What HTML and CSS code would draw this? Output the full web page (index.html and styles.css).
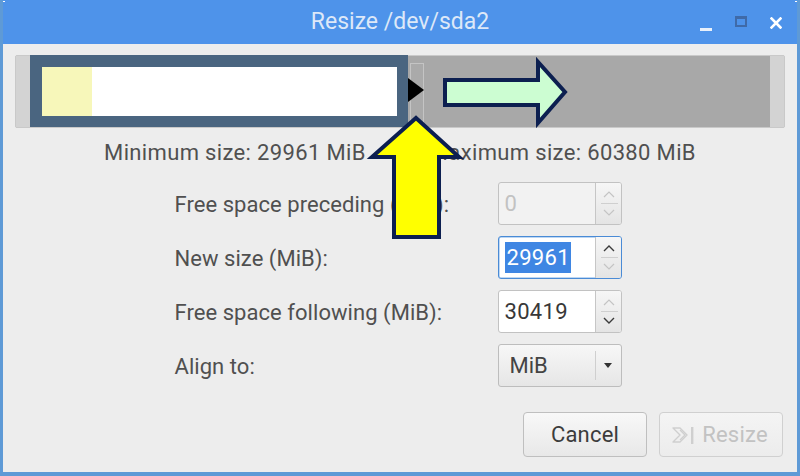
FILE: index.html
```html
<!DOCTYPE html>
<html>
<head>
<meta charset="utf-8">
<link rel="stylesheet" href="styles.css">
</head>
<body>
<div class="window">
  <div class="titlebar">
    <span class="grip grip-l"></span>
    <span class="grip grip-r"></span>
    <div class="tb-spacer"></div>
    <div class="title">Resize /dev/sda2</div>
    <div class="controls">
      <span class="ctl ctl-min"></span>
      <span class="ctl ctl-max"></span>
      <svg class="ctl ctl-close" viewBox="0 0 12 12" width="12" height="12"><path d="M1.5 1.5 L10.5 10.5 M10.5 1.5 L1.5 10.5" stroke="#ffffff" stroke-width="2.6" stroke-linecap="square"/></svg>
    </div>
  </div>

  <div class="content">
    <div class="partbar">
      <div class="cap"></div>
      <div class="part">
        <div class="used"></div>
        <div class="free"></div>
      </div>
      <div class="handle">
        <svg class="pointer" viewBox="0 0 16 24" width="16" height="24"><polygon points="0,0 16,12 0,24" fill="#000000"/></svg>
      </div>
      <div class="unalloc"></div>
      <div class="cap"></div>
    </div>

    <div class="sizes">
      <span>Minimum size: 29961 MiB</span>
      <span>Maximum size: 60380 MiB</span>
    </div>

    <div class="form">
      <label class="lbl">Free space preceding (MiB):</label>
      <div class="spin disabled">
        <div class="entry">0</div>
        <div class="steps">
          <svg viewBox="0 0 26 41" width="26" height="41">
            <polyline points="8,14 13,9 18,14" fill="none" stroke="#c4c4c4" stroke-width="1.2"/>
            <line x1="5" y1="20.5" x2="22" y2="20.5" stroke="#cfcfcf" stroke-width="1"/>
            <polyline points="8,27 13,32 18,27" fill="none" stroke="#c4c4c4" stroke-width="1.2"/>
          </svg>
        </div>
      </div>

      <label class="lbl">New size (MiB):</label>
      <div class="spin focused">
        <div class="entry"><span class="sel">29961</span></div>
        <div class="steps">
          <svg viewBox="0 0 26 41" width="26" height="41">
            <polyline points="8,14 13,9 18,14" fill="none" stroke="#3a3a3a" stroke-width="1.4"/>
            <line x1="5" y1="20.5" x2="22" y2="20.5" stroke="#cfcfcf" stroke-width="1"/>
            <polyline points="8,27 13,32 18,27" fill="none" stroke="#c4c4c4" stroke-width="1.2"/>
          </svg>
        </div>
      </div>

      <label class="lbl">Free space following (MiB):</label>
      <div class="spin">
        <div class="entry">30419</div>
        <div class="steps">
          <svg viewBox="0 0 26 41" width="26" height="41">
            <polyline points="8,14 13,9 18,14" fill="none" stroke="#c4c4c4" stroke-width="1.2"/>
            <line x1="5" y1="20.5" x2="22" y2="20.5" stroke="#cfcfcf" stroke-width="1"/>
            <polyline points="8,27 13,32 18,27" fill="none" stroke="#3a3a3a" stroke-width="1.4"/>
          </svg>
        </div>
      </div>

      <label class="lbl">Align to:</label>
      <div class="combo">
        <div class="combo-text">MiB</div>
        <div class="combo-arrow">
          <svg viewBox="0 0 8 5" width="8" height="5"><polygon points="0,0 8,0 4,5" fill="#333333"/></svg>
        </div>
      </div>
    </div>

    <div class="actions">
      <div class="btn">Cancel</div>
      <div class="btn btn-disabled">
        <svg class="btn-icon" viewBox="0 0 28 24" width="28" height="24">
          <path d="M3 5 L10 5 L17 12 L10 19 L3 19 L10 12 Z" fill="none" stroke="#cfcfcf" stroke-width="1.4" stroke-linejoin="round"/>
          <path d="M10 7 L15 12 L10 17" fill="none" stroke="#cfcfcf" stroke-width="1.4"/>
          <rect x="21" y="4" width="2.4" height="17" fill="#cfcfcf"/>
        </svg>
        <span>Resize</span>
      </div>
    </div>
  </div>

  <svg class="overlay" viewBox="0 0 800 476" width="800" height="476">
    <polygon points="445,80 538,80 538,62 565,92 538,123 538,105 445,105" fill="#ccfdd2" stroke="#0c1f50" stroke-width="4" stroke-linejoin="miter"/>
    <polygon points="416,118 459,157 439,157 439,237 394,237 394,157 372,157" fill="#ffff00" stroke="#0c1f50" stroke-width="4" stroke-linejoin="miter"/>
  </svg>
</div>
</body>
</html>
```

FILE: styles.css
```css
* { box-sizing: border-box; }

html, body {
  margin: 0;
  padding: 0;
  background: #ededed;
}

body {
  font-family: Roboto, "Liberation Sans", sans-serif;
  color: #505050;
}

.window {
  position: relative;
  width: 800px;
  height: 476px;
  background: #ededed;
  border-left: 3px solid #5e9ad6;
  border-right: 3px solid #5e9ad6;
  border-bottom: 4px solid #5e9ad6;
  overflow: hidden;
}

.titlebar {
  position: relative;
  height: 44px;
  margin: 0 -3px;
  background: #4e93ea;
  display: grid;
  grid-template-columns: 1fr auto 1fr;
  align-items: center;
  padding: 0 18px 0 18px;
}

.grip {
  position: absolute;
  top: 1px;
  width: 4px;
  height: 4px;
  border-top: 1px solid #ffffff;
}
.grip-l { left: 1px; border-left: 1px solid #ffffff; }
.grip-r { right: 1px; border-right: 1px solid #ffffff; }

.title {
  font-size: 23px;
  color: #dde8f8;
  padding-bottom: 1px;
}

.controls {
  display: flex;
  justify-content: flex-end;
  align-items: center;
  gap: 23px;
  padding-top: 3px;
}

.ctl { display: block; }

.ctl-min {
  width: 12px;
  height: 3px;
  margin-top: 12px;
  background: #e8f0fb;
}

.ctl-max {
  width: 12px;
  height: 11px;
  border: 2px solid #3f6aa8;
  border-top-width: 3px;
  margin-top: -4px;
}

.ctl-close { margin-top: -2px; }

.content {
  padding: 11px 12px 0 12px;
}

.partbar {
  display: flex;
  height: 73px;
  background: #a8a8a8;
  border: 1px solid #c9c9c9;
  border-radius: 2px;
}

.cap {
  width: 14px;
  background: #d3d3d3;
}

.part {
  display: flex;
  width: 378px;
  margin-top: -1px;
  padding: 12px 11px 11px 12px;
  background: #4a6580;
}

.used {
  width: 50px;
  background: #f7f7ba;
}

.free {
  flex: 1;
  background: #ffffff;
}

.handle {
  position: relative;
  width: 14px;
  margin: 7px 0 0 2px;
  border: 1px solid #c4c4c4;
  border-bottom: none;
  background: #aaaaaa;
}

.pointer {
  position: absolute;
  left: -3px;
  top: 14px;
}

.unalloc {
  flex: 1;
}

.sizes {
  display: flex;
  justify-content: center;
  gap: 63px;
  margin-top: 13px;
  font-size: 22px;
  line-height: 24px;
  letter-spacing: 0.35px;
}

.form {
  display: grid;
  grid-template-columns: 300px 124px;
  column-gap: 23px;
  row-gap: 11px;
  justify-content: center;
  margin-top: 17px;
  margin-left: -4px;
}

.lbl {
  display: flex;
  align-items: center;
  font-size: 22px;
  letter-spacing: 0.05px;
  padding-top: 2px;
}

.spin {
  display: flex;
  height: 43px;
  border: 1px solid #c2c2c2;
  border-radius: 3px;
  background: #ffffff;
  overflow: hidden;
}

.entry {
  flex: 1;
  display: flex;
  align-items: center;
  padding-left: 6px;
  font-size: 22px;
  letter-spacing: 0.3px;
  color: #383838;
}

.spin.disabled { background: #f2f2f2; }
.spin.disabled .entry { color: #c2c2c2; }

.spin.focused {
  border-color: #4a8bd6;
  box-shadow: inset 0 0 0 0.5px #7fb0e8;
}

.sel {
  background: #3f86e3;
  color: #ffffff;
  padding: 3px 1px 3px 2px;
}

.steps {
  width: 26px;
  border-left: 1px solid #c6c6c6;
  background: linear-gradient(#f6f6f6, #e4e4e4);
}

.steps svg { display: block; }

.combo {
  display: flex;
  height: 43px;
  border: 1px solid #bdbdbd;
  border-radius: 3px;
  background: linear-gradient(#f7f7f7, #e6e6e6);
}

.combo-text {
  flex: 1;
  display: flex;
  align-items: center;
  padding-left: 11px;
  font-size: 22px;
  color: #444444;
  border-right: 1px solid #cfcfcf;
  margin: 6px 0;
}

.combo-arrow {
  width: 25px;
  display: flex;
  align-items: center;
  justify-content: center;
}

.combo-arrow svg { display: block; }

.actions {
  display: flex;
  justify-content: flex-end;
  gap: 12px;
  margin-top: 25px;
  margin-right: 2px;
}

.btn {
  width: 124px;
  height: 45px;
  display: flex;
  align-items: center;
  justify-content: center;
  gap: 4px;
  border: 1px solid #bfbfbf;
  border-radius: 4px;
  background: linear-gradient(#f8f8f8, #e8e8e8);
  font-size: 22px;
  letter-spacing: 0.2px;
  color: #3c3c3c;
}

.btn-disabled {
  color: #c2c2c2;
  border-color: #d0d0d0;
  background: linear-gradient(#f4f4f4, #ececec);
}

.btn-icon { display: block; margin-left: -4px; }

.overlay {
  position: absolute;
  left: -3px;
  top: 0;
  pointer-events: none;
}
```
